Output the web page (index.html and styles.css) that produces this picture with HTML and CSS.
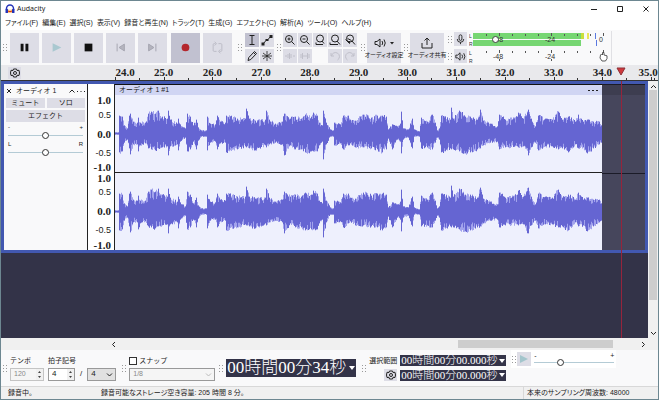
FILE: index.html
```html
<!DOCTYPE html>
<html lang="ja">
<head>
    <meta charset="utf-8">
    <title>Audacity</title>
    <link rel="stylesheet" href="styles.css">
</head>
<body>
<div id="app">
    <header class="titlebar">
        <svg class="logo" width="10" height="10" viewBox="0 0 20 20">
            <path d="M3 12V9a7 7 0 0 1 14 0v3" fill="none" stroke="#2433b8" stroke-width="3"/>
            <rect x="1" y="10" width="5" height="8" rx="1" fill="#2433b8"/>
            <rect x="14" y="10" width="5" height="8" rx="1" fill="#2433b8"/>
            <path d="M6 14l2-4 2 6 2-6 2 4v3H6z" fill="#f59a1c"/>
            <path d="M7 15h6" stroke="#e2321c" stroke-width="2"/>
        </svg>
        <span>Audacity</span>
        <div class="window-buttons">
            <button aria-label="最小化"><svg width="8" height="8"><path d="M1 4.5h6"/></svg></button>
            <button aria-label="最大化"><svg width="8" height="8"><path d="M1.5 1.5h5v5h-5z"/></svg></button>
            <button aria-label="閉じる"><svg width="8" height="8"><path d="M1.5 1.5l5 5M6.5 1.5l-5 5"/></svg></button>
        </div>
    </header>

    <nav class="menu">
        <a href="#">ファイル(F)</a>
        <a href="#">編集(E)</a>
        <a href="#">選択(S)</a>
        <a href="#">表示(V)</a>
        <a href="#">録音と再生(N)</a>
        <a href="#">トラック(T)</a>
        <a href="#">生成(G)</a>
        <a href="#">エフェクト(C)</a>
        <a href="#">解析(A)</a>
        <a href="#">ツール(O)</a>
        <a href="#">ヘルプ(H)</a>
    </nav>

    <div class="toolbar">
        <i class="grip"></i>
        <div class="transport">
            <button aria-label="一時停止"><svg viewBox="0 0 30 30"><path d="M11 11h3v8h-3zM16 11h3v8h-3z" fill="#111"/></svg></button>
            <button aria-label="再生"><svg viewBox="0 0 30 30"><path d="M11 10.5l9 4.5-9 4.5z" fill="#a9c8d0"/></svg></button>
            <button aria-label="停止"><svg viewBox="0 0 30 30"><path d="M11 11h8v8h-8z" fill="#111"/></svg></button>
            <button aria-label="先頭へ"><svg viewBox="0 0 30 30"><path d="M11.5 11v8M19 11.5v7L13.5 15z" fill="#b4b4be" stroke="#a5a5b0"/></svg></button>
            <button aria-label="末尾へ"><svg viewBox="0 0 30 30"><path d="M18.5 11v8M11 11.5v7l5.5-3.5z" fill="#b4b4be" stroke="#a5a5b0"/></svg></button>
            <button class="pressed" aria-label="録音"><svg viewBox="0 0 30 30"><circle cx="15" cy="15" r="4" fill="#b4262c"/></svg></button>
            <button aria-label="ループ"><svg viewBox="0 0 30 30"><path d="M14 19h-2.5a1 1 0 0 1-1-1v-6a1 1 0 0 1 1-1H13M16 11h2.500a1 1 0 0 1 1 1v6a1 1 0 0 1-1 1H17M12 9l2 2-2 2M18 17l-2 2 2 2" fill="none" stroke="#bcbcc6"/></svg></button>
        </div>
        <i class="grip"></i>
        <div class="tools">
            <button class="pressed" aria-label="選択ツール"><svg viewBox="0 0 14 14"><path d="M4.5 2.5h5M7 2.5v9M4.5 11.5h5"/></svg></button>
            <button aria-label="エンベロープツール"><svg viewBox="0 0 14 14"><path d="M3 11l3-3.5 2-1L11 3"/><path d="M1.5 9.5h3v3h-3zM9.5 2h3v3h-3zM5.5 6h3v2h-3z" fill="#222" stroke="none"/></svg></button>
            <button aria-label="描画ツール"><svg viewBox="0 0 14 14"><path d="M3 11.5l.8-3L9.5 2.5l2 2-5.7 6zM8.5 3.5l2 2"/></svg></button>
            <button aria-label="マルチツール"><svg viewBox="0 0 14 14"><path d="M7 2v10M3 4l8 6M11 4l-8 6M2 7h10" stroke-width=".8"/></svg></button>
        </div>
        <i class="grip"></i>
        <div class="zooms">
            <button aria-label="ズームイン"><svg viewBox="0 0 14 14"><circle cx="6" cy="6" r="3.5"/><path d="M8.5 8.5l3 3M4.5 6h3M6 4.5v3"/></svg></button>
            <button aria-label="ズームアウト"><svg viewBox="0 0 14 14"><circle cx="6" cy="6" r="3.5"/><path d="M8.5 8.5l3 3M4.5 6h3"/></svg></button>
            <button aria-label="選択範囲に合わせる"><svg viewBox="0 0 14 14"><circle cx="7" cy="5.5" r="3.5"/><path d="M9 8l2 2.5M3 11.5h7M3 9.5v2"/></svg></button>
            <button aria-label="全体に合わせる"><svg viewBox="0 0 14 14"><circle cx="7" cy="5.5" r="3.5"/><path d="M9 8l3 3.5M2 11.5h8M2 9.5v2"/></svg></button>
            <button aria-label="ズーム切替"><svg viewBox="0 0 14 14"><circle cx="7" cy="5.5" r="3.5"/><path d="M9 8l3 3.5M2.500 6.5l4 4M6.5 10.5V8M4.5 5.5l4 2"/></svg></button>
            <button class="off" aria-label="トリム"><svg viewBox="0 0 14 14"><path d="M2 7h2M10 7h2M5 5v4M6.5 4v6M8 5v4"/></svg></button>
            <button class="off" aria-label="無音化"><svg viewBox="0 0 14 14"><path d="M3 5v4M4.5 4v6M5 7h4M9.5 4v6M11 5v4"/></svg></button>
            <span></span>
            <button class="off" aria-label="元に戻す"><svg viewBox="0 0 14 14"><path d="M3 4v3h3M3.5 7a4 4 0 1 1 6 4"/></svg></button>
            <button class="off" aria-label="やり直し"><svg viewBox="0 0 14 14"><path d="M11 4v3H8M10.5 7a4 4 0 1 0-6 4"/></svg></button>
        </div>
        <i class="grip"></i>
        <button class="labelled">
            <svg width="22" height="14" viewBox="0 0 22 14"><path d="M2 5.5h2L7 3v8L4 8.5H2zM9 5q1.500 2 0 4M11 3.5q2.5 3.5 0 7"/><path d="M17 6h4l-2 2.5z" fill="#222" stroke="none"/></svg>
            <span>オーディオ設定</span>
        </button>
        <i class="grip"></i>
        <button class="labelled">
            <svg width="14" height="14" viewBox="0 0 14 14"><path d="M2 7v5h10V7M7 9V2M4.5 4.5L7 2l2.5 2.5"/></svg>
            <span>オーディオ共有</span>
        </button>
        <div class="meters">
            <div class="meter-row">
                <i class="grip"></i>
                <button aria-label="録音メーター"><svg viewBox="0 0 14 14"><rect x="5.5" y="2" width="3" height="6" rx="1.5"/><path d="M3.5 6.5q0 3.5 3.5 3.5t3.5-3.5M7 10v2"/></svg></button>
                <svg class="meter" width="142" height="15" viewBox="0 0 142 15">
                    <text x="0" y="6">L</text><text x="0" y="14">R</text>
                    <path d="M4 1h108v6H4zM4 8h108v6H4z" fill="#76d672"/>
                    <path d="M112 1h3v6h-3z" fill="#c9df3c"/>
                    <path d="M118 1h2v6h-2z" fill="#ece65a"/>
                    <path d="M126.5 1v6M127.5 8v6" stroke="#5a78e0"/>
                    <path class="ticks" d="M17.5 2v2M30.5 1v3M43.5 2v2M56.5 2v2M69.5 2v2M82.5 1v3M95.5 2v2M108.5 2v2M121.5 2v2M134.5 1v3"/>
                    <text class="db" x="24" y="10">-48</text><text class="db" x="76" y="10">-24</text><text class="db" x="130" y="10">0</text>
                    <circle cx="26.5" cy="7.5" r="3" fill="#fff" stroke="#444"/>
                </svg>
            </div>
            <div class="meter-row">
                <i class="grip"></i>
                <button aria-label="再生メーター"><svg viewBox="0 0 14 14"><path d="M2 5.5h2L6.5 3v8L4 8.5H2zM8.5 5q1.500 2 0 4M10.5 3.5q2.5 3.5 0 7"/></svg></button>
                <svg class="meter" width="142" height="15" viewBox="0 0 142 15">
                    <text x="0" y="6">L</text><text x="0" y="14">R</text>
                    <path class="ticks" d="M17.5 2v2M30.5 1v3M30.5 10v2M43.5 2v2M56.5 2v2M69.5 2v2M82.5 1v3M82.5 10v2M95.5 2v2M108.5 2v2M121.5 2v2M134.5 1v3"/>
                    <text class="db" x="24" y="10">-48</text><text class="db" x="76" y="10">-24</text>
                    <path d="M131.5 6l1-1 1 1V3.5h1.500V6l3 .8v2.7l-1.5 2.5h-3.5l-2-3z" fill="#fff" stroke="#333" stroke-width=".8"/>
                </svg>
            </div>
        </div>
    </div>

    <div class="timeline">
        <div class="timeline-head">
            <button aria-label="タイムライン設定"><svg width="10" height="10" viewBox="0 0 10 10"><path d="M3.5 1h3L7 2.5l2-.2.5 2.7L9 7.5l-2-.2L6.5 9h-3L3 7.3l-2 .2L.5 5 1 2.3l2 .2z"/><circle cx="5" cy="5" r="1.5"/></svg></button>
        </div>
        <div class="seconds">
            <span class="first"><b>24.0</b></span><span><b>25.0</b></span><span><b>26.0</b></span><span><b>27.0</b></span><span><b>28.0</b></span><span><b>29.0</b></span><span><b>30.0</b></span><span><b>31.0</b></span><span><b>32.0</b></span><span><b>33.0</b></span><span><b>34.0</b></span><span class="last"><b>35.0</b></span>
            <svg class="playhead" width="10" height="9"><path d="M1 1h8L5 8z"/></svg>
        </div>
    </div>

    <main class="workspace">
        <div class="canvas">
            <section class="track">
                <div class="panel">
                    <div class="track-title">
                        <button aria-label="トラックを閉じる"><svg width="6" height="6"><path d="M1 1l4 4M5 1L1 5"/></svg></button>
                        <span>オーディオ 1</span>
                        <button aria-label="折りたたむ"><svg width="6" height="6"><path d="M.5 4.5L3 2l2.5 2.5"/></svg></button>
                        <button aria-label="メニュー"><svg width="8" height="6"><path d="M0 3.5h1M3.5 3.5h1M7 3.5h1"/></svg></button>
                    </div>
                    <div class="mute-solo">
                        <button>ミュート</button>
                        <button>ソロ</button>
                    </div>
                    <button class="effects">エフェクト</button>
                    <div class="slider">
                        <span>-</span><span>+</span>
                        <input type="range" aria-label="ゲイン" min="0" max="100" value="50">
                    </div>
                    <div class="slider">
                        <span>L</span><span>R</span>
                        <input type="range" aria-label="パン" min="0" max="100" value="50">
                    </div>
                </div>
                <div class="scale">
                    <div class="channel-scale"><b>1.0</b><span>0.5</span><b>0.0</b><span>-0.5</span><b>-1.0</b></div>
                    <div class="channel-scale"><b>1.0</b><span>0.5</span><b>0.0</b><span>-0.5</span><b>-1.0</b></div>
                </div>
                <div class="lane">
                    <div class="clip">
                        <div class="clip-head"><span>オーディオ 1 #1</span><svg width="10" height="10"><path d="M0 5.500h2M4 5.500h2M8 5.500h2"/></svg></div>
                        <svg class="wave" viewBox="0 -39 487 78" preserveAspectRatio="none"></svg>
                        <svg class="wave" viewBox="0 -39 487 78" preserveAspectRatio="none"></svg>
                    </div>
                    <div class="empty"></div>
                </div>
            </section>
            <div class="playline"></div>
        </div>
        <div class="vscroll">
            <svg width="7" height="7"><path d="M1 5l2.5-2.5L6 5"/></svg>
            <div class="thumb"></div>
            <svg width="7" height="7"><path d="M1 2l2.5 2.5L6 2"/></svg>
        </div>
    </main>

    <div class="hscroll">
        <svg width="7" height="7"><path d="M5 1L2.5 3.5 5 6"/></svg>
        <div class="thumb"></div>
        <svg width="7" height="7"><path d="M2 1l2.5 2.5L2 6"/></svg>
    </div>

    <div class="bottombar">
        <i class="grip"></i>
        <div class="field tempo">
            <label for="tempo">テンポ</label>
            <div class="spin off"><input id="tempo" value="120" disabled><svg width="7" height="11"><path d="M2 4l1.5-2L5 4zM2 7l1.5 2L5 7z"/></svg></div>
        </div>
        <div class="field signature">
            <label for="beats">拍子記号</label>
            <div class="line">
                <div class="spin"><input id="beats" value="4"><svg width="7" height="11"><path d="M2 4l1.5-2L5 4zM2 7l1.5 2L5 7z"/></svg></div>
                <span>/</span>
                <div class="pick"><select aria-label="音符"><option>4</option></select><svg width="7" height="7"><path d="M1 2.5L3.5 5 6 2.5"/></svg></div>
            </div>
        </div>
        <i class="grip"></i>
        <div class="field snap">
            <label><input type="checkbox">スナップ</label>
            <div class="pick off"><select aria-label="スナップ単位" disabled><option>1/8</option></select><svg width="7" height="7"><path d="M1 2.5L3.5 5 6 2.5"/></svg></div>
        </div>
        <i class="grip"></i>
        <div class="clock"><span>00時間00分34秒</span><i class="caret"></i></div>
        <i class="grip divided"></i>
        <div class="selection">
            <span>選択範囲</span>
            <div class="clock small"><span>00時間00分00.000秒</span><i class="caret"></i></div>
            <button aria-label="選択範囲の設定"><svg width="10" height="10" viewBox="0 0 10 10"><path d="M3.5 1h3L7 2.5l2-.2.5 2.7L9 7.5l-2-.2L6.5 9h-3L3 7.3l-2 .2L.5 5 1 2.3l2 .2z"/><circle cx="5" cy="5" r="1.5"/></svg></button>
            <div class="clock small"><span>00時間00分00.000秒</span><i class="caret"></i></div>
        </div>
        <div class="speed">
            <i class="grip"></i>
            <button aria-label="指定速度で再生"><svg width="14" height="14"><path d="M3 3l8 4-8 4z"/></svg></button>
            <div class="slider">
                <span>-</span><span>+</span>
                <input type="range" aria-label="再生速度" min="0" max="100" value="31">
            </div>
        </div>
    </div>

    <footer class="status">
        <span class="state">録音中。</span>
        <span class="space">録音可能なストレージ空き容量: 205 時間 8 分。</span>
        <span class="rate">本来のサンプリング周波数: 48000</span>
    </footer>
</div>
<script src="wave.js"></script>
</body>
</html>
```
FILE: styles.css
```css
* {
    box-sizing: border-box;
}
body {
    margin: 0;
    font: 7px/10px "Liberation Sans", "Noto Sans CJK JP", sans-serif;
    font-feature-settings: "palt";
    color: #222;
}
button, input, select {
    font: inherit;
    color: inherit;
    margin: 0;
    padding: 0;
    border: 0;
    border-radius: 0;
}
button {
    display: flex;
    align-items: center;
    justify-content: center;
    background: #dddde6;
    font-feature-settings: inherit;
}
svg {
    display: block;
    flex: none;
    fill: none;
    stroke: #222;
}
#app {
    display: flex;
    flex-direction: column;
    min-height: 100vh;
    background: #f9f9fa;
    border: 1px solid #6d8791;
}

/* title and menu */
.titlebar {
    display: flex;
    align-items: center;
    gap: 2px;
    height: 15px;
    padding: 0 8px 0 4px;
    background: #fff;
    font-family: "Noto Sans", sans-serif;
}
.logo {
    stroke: none;
}
.window-buttons {
    display: flex;
    gap: 18px;
    margin-left: auto;
}
.window-buttons button {
    background: none;
}
.menu {
    display: flex;
    gap: 4px;
    height: 14px;
    padding: 0 4px;
    background: #fff;
    line-height: 14px;
    white-space: nowrap;
}
.menu a {
    color: #222;
    text-decoration: none;
}

/* top toolbar */
.grip {
    flex: none;
    width: 5px;
    height: 9px;
    background: radial-gradient(circle, #999 0 1px, transparent 1px) 0 0 / 3px 3px;
}
.toolbar {
    display: flex;
    align-items: center;
    gap: 2px;
    height: 35px;
    padding-left: 1px;
    background: #f9f9fa;
}
.toolbar svg:not(.meter) {
    max-width: 100%;
}
.transport {
    display: flex;
    gap: 3px;
    margin: 0 3px 0 1px;
}
.transport button {
    width: 29px;
    height: 30px;
}
.transport svg {
    width: 29px;
    stroke: none;
}
.transport .pressed {
    margin-left: 1px;
}
.pressed {
    background: #c1c1d0;
}
.tools, .zooms {
    display: grid;
    grid-template-columns: repeat(2, 14px);
    grid-auto-rows: 14px;
    gap: 2px 1px;
}
.tools {
    margin-left: 1px;
}
.zooms {
    grid-template-columns: repeat(5, 14px);
    margin-right: 1px;
}
.toolbar .off svg {
    stroke: #c0c0ca;
}
.labelled {
    flex-direction: column;
    width: 34px;
    height: 30px;
    white-space: nowrap;
}
.labelled span {
    font-size: 6px;
}
.meters {
    flex: none;
    margin-left: 1px;
    border-right: 1px solid #e0e0e4;
}
.meter-row {
    display: flex;
    align-items: center;
    gap: 2px;
    height: 17px;
}
.meter-row button {
    width: 13px;
    height: 14px;
}
.meter {
    stroke: none;
}
.meter text {
    font-size: 5px;
    fill: #333;
}
.meter .db {
    font-size: 7px;
}
.ticks {
    stroke: #555;
}

/* time ruler */
.timeline {
    display: flex;
    height: 16px;
    background: #e9e9ec;
    border-bottom: 1px solid #333;
}
.timeline-head {
    display: flex;
    align-items: center;
    width: 114px;
    padding-left: 7px;
}
.timeline-head button {
    width: 13px;
    height: 12px;
}
.seconds {
    position: relative;
    display: flex;
    flex: 1;
    font: 11px/14px "Liberation Serif", serif;
}
.seconds > span {
    flex: 1;
    min-width: 0;
    background: linear-gradient(#333, #333) 0 100% / 1px 3px no-repeat, linear-gradient(#333, #333) 50% 100% / 1px 2px no-repeat;
}
.seconds b {
    display: block;
    width: 20px;
    margin-left: -10px;
    text-align: center;
}
.seconds .first b {
    margin-left: 0;
}
.seconds .last {
    display: flex;
    flex: 0 0 7px;
    justify-content: flex-end;
}
.seconds .last b {
    flex: none;
    margin: 0;
}
.playhead {
    position: absolute;
    right: 32px;
    top: 2px;
    fill: #d0383c;
    stroke: #8d3038;
}

/* tracks */
.workspace {
    display: flex;
    flex: 1;
}
.canvas {
    position: relative;
    flex: 1;
    background: #333348;
}
.track {
    display: flex;
    height: 172px;
    border: 3px solid #4258b0;
    font-feature-settings: normal;
}
.panel {
    display: flex;
    flex-direction: column;
    gap: 2px;
    width: 84px;
    padding: 2px;
    background: #f9f9fa;
    border-right: 1px solid #222;
}
.track-title {
    display: flex;
    align-items: center;
    gap: 2px;
    height: 10px;
}
.track-title span {
    flex: 1;
    padding-left: 2px;
    white-space: nowrap;
}
.track-title button {
    background: none;
}
.mute-solo {
    display: flex;
    gap: 2px;
}
.mute-solo button {
    flex: 1;
    height: 10px;
}
.effects {
    height: 12px;
}
.slider {
    display: flex;
    flex-wrap: wrap;
    justify-content: space-between;
    padding: 0 2px;
    font-size: 6px;
    line-height: 7px;
}
.slider input {
    width: 100%;
    height: 8px;
    appearance: none;
    background: linear-gradient(#b4cbd5, #b4cbd5) 0 50% / 100% 1px no-repeat;
}
.slider input::-webkit-slider-thumb {
    appearance: none;
    width: 7px;
    height: 7px;
    border: 1px solid #333;
    border-radius: 50%;
    background: #fff;
}
.scale {
    display: flex;
    flex-direction: column;
    width: 27px;
    padding-top: 11px;
    background: #fff;
    border-right: 1px solid #222;
}
.channel-scale {
    display: grid;
    flex: 1;
    grid-template-rows: 11fr 18fr 20fr 18fr 11fr;
    align-items: center;
    padding-right: 3px;
    text-align: right;
    font: 11px/10px "Liberation Serif", serif;
}
.channel-scale span {
    font: 9px/10px "Liberation Sans", sans-serif;
}
.lane {
    display: flex;
    flex: 1;
}
.clip {
    display: flex;
    flex: 487;
    flex-direction: column;
    border-top: 1px solid #111;
    background: #eef0fd;
}
.clip-head {
    display: flex;
    justify-content: space-between;
    padding: 0 4px;
    background: #d0d5f3;
    border-radius: 0 3px 0 0;
}
.wave {
    flex: 1;
    width: 100%;
    min-height: 0;
    stroke: none;
}
.wave + .wave {
    border-top: 1px solid #222;
}
.empty {
    flex: 43;
    background: linear-gradient(#1b1b28 1px, #3d3d50 1px 11px, #46465c 11px 89px, #1b1b28 89px 90px, #46465c 90px);
}
.playline {
    position: absolute;
    top: 0;
    bottom: 0;
    right: 26px;
    width: 1px;
    background: #96243c;
}
.vscroll {
    display: flex;
    flex-direction: column;
    align-items: center;
    width: 10px;
    padding: 2px 0 1px;
    background: #f0f0f0;
}
.vscroll .thumb {
    width: 8px;
    height: 210px;
    margin-bottom: auto;
}
.thumb {
    background: #cdcdcd;
}
.hscroll {
    display: flex;
    align-items: center;
    height: 12px;
    padding: 0 11px 0 109px;
    background: #f0f0f0;
}
.hscroll .thumb {
    width: 155px;
    height: 8px;
    margin: 0 27px 0 auto;
}

/* bottom toolbar */
.bottombar {
    display: flex;
    align-items: center;
    gap: 3px;
    height: 36px;
    padding-left: 1px;
    background: #f9f9fa;
}
.field {
    display: flex;
    flex-direction: column;
    gap: 2px;
}
.field label {
    display: flex;
    align-items: center;
    gap: 2px;
    height: 10px;
    font-feature-settings: normal;
    white-space: nowrap;
}
.field input[type="checkbox"] {
    width: 8px;
    height: 8px;
    appearance: none;
    border: 1px solid #333;
    background: #fff;
}
.line {
    display: flex;
    align-items: center;
    gap: 5px;
    font-size: 8px;
}
.spin, .pick {
    display: flex;
    align-items: center;
    height: 13px;
    border: 1px solid #999;
    background: #fff;
}
.spin {
    width: 27px;
}
.spin input {
    flex: 1;
    min-width: 0;
    padding-left: 3px;
    background: none;
}
.spin svg {
    background: #f0f0f0;
    fill: #444;
    stroke: none;
}
.tempo .spin {
    width: 34px;
}
.pick {
    width: 29px;
    padding-right: 2px;
    background: #e1e1e1;
}
.pick select {
    flex: 1;
    min-width: 0;
    appearance: none;
    padding-left: 3px;
    background: none;
    opacity: 1;
}
.snap .pick {
    width: 86px;
}
.spin.off, .pick.off {
    color: #888;
    border-color: #c4c4c4;
    background: #f5f5f5;
}
.pick.off {
    border-color: #999;
}
.off svg {
    stroke: #bbb;
}
.spin.off svg {
    stroke: none;
}
.signature {
    margin: 0 2px 0 1px;
}
.clock {
    display: flex;
    align-items: center;
    justify-content: space-between;
    width: 130px;
    height: 18px;
    padding: 0 1px;
    background: #333348;
    color: #fff;
    font: 17px/18px "Liberation Serif", "Noto Sans CJK JP", serif;
    font-feature-settings: normal;
    font-weight: 300;
    white-space: nowrap;
}
.caret {
    border: 3px solid transparent;
    border-top: 4px solid #fff;
    border-bottom: 0;
}
.clock.small {
    width: 106px;
    height: 11px;
    font-size: 11px;
    line-height: 11px;
}
.grip.divided {
    margin-left: 2px;
}
.selection {
    display: grid;
    grid-template-columns: 28px 106px;
    gap: 3px;
    align-items: center;
    margin-right: 2px;
}
.selection > span {
    white-space: nowrap;
}
.selection button {
    justify-self: end;
    width: 13px;
    height: 12px;
}
.speed {
    display: flex;
    align-items: center;
    align-self: flex-start;
    gap: 1px;
    height: 18px;
    background: #fff;
}
.speed svg {
    fill: #a3c5cc;
    stroke: none;
}
.speed .slider {
    width: 84px;
}
.speed .slider span {
    font-size: 7px;
}

/* status bar */
.status {
    display: flex;
    height: 13px;
    padding-left: 7px;
    background: #f0f0f0;
    border-top: 1px solid #d8d8d8;
    line-height: 12px;
    white-space: nowrap;
}
.state {
    width: 93px;
}
.rate {
    width: 135px;
    margin-left: auto;
    padding-left: 3px;
    border-left: 1px solid #d8d8d8;
}
```
FILE: wave.js
```js
// Peaks of the clip: x, height above zero, depth below zero.
const peaks = [
    [0, 1, 1], [3, 1, 1], [4, 18, 19], [7, 17, 18], [9, 8, 9], [12, 5, 6], [14, 18, 15], [15, 20, 21],
    [18, 12, 11], [22, 11, 11], [23, 16, 18], [25, 11, 12], [30, 11, 10], [33, 20, 15], [36, 22, 16],
    [40, 20, 17], [43, 23, 15], [47, 17, 14], [52, 15, 13], [53, 23, 22], [55, 14, 13], [62, 10, 11],
    [63, 15, 17], [65, 9, 8], [70, 5, 4], [72, 20, 18], [75, 17, 16], [78, 8, 8], [81, 14, 16],
    [83, 6, 7], [86, 3, 3], [91, 3, 3], [92, 17, 17], [95, 10, 9], [100, 9, 8], [102, 18, 16],
    [105, 12, 10], [110, 11, 9], [111, 18, 19], [122, 15, 16], [130, 15, 13], [131, 25, 14], [134, 15, 15],
    [140, 13, 17], [150, 14, 12], [151, 23, 14], [154, 14, 11], [160, 10, 9], [167, 12, 11], [169, 20, 22],
    [175, 15, 12], [180, 17, 16], [186, 15, 16], [190, 19, 19], [196, 17, 18], [198, 21, 18], [202, 18, 18],
    [204, 11, 12], [207, 8, 8], [208, 23, 26], [211, 11, 11], [215, 4, 3], [218, 3, 3], [219, 11, 12],
    [225, 9, 10], [228, 18, 16], [233, 18, 12], [235, 14, 10], [240, 13, 14], [248, 19, 14], [256, 16, 15],
    [262, 18, 16], [267, 18, 19], [271, 17, 16], [273, 4, 5], [277, 9, 16], [282, 7, 6], [285, 10, 8],
    [286, 22, 20], [288, 5, 6], [293, 4, 4], [297, 15, 15], [299, 4, 3], [304, 2, 3], [306, 16, 15],
    [312, 12, 14], [317, 19, 16], [320, 11, 9], [322, 3, 4], [324, 5, 6], [326, 18, 19], [335, 14, 15],
    [336, 26, 16], [338, 15, 16], [344, 23, 18], [350, 17, 20], [355, 17, 19], [362, 14, 16], [365, 24, 15],
    [368, 13, 12], [375, 10, 9], [382, 7, 8], [384, 19, 16], [390, 14, 14], [402, 17, 13], [403, 21, 14],
    [408, 15, 13], [413, 24, 22], [416, 15, 14], [420, 7, 9], [423, 18, 17], [430, 15, 13], [437, 14, 13],
    [443, 22, 16], [447, 14, 15], [453, 17, 19], [460, 12, 11], [463, 19, 15], [468, 12, 14], [472, 14, 20],
    [478, 12, 15], [484, 12, 11], [486, 8, 9], [487, 7, 8]
];

// small repeatable noise, 0..1
function noise(n) {
    const v = Math.sin(n * 12.9898) * 43758.5453;
    return v - Math.floor(v);
}

function outline(side, low, seed) {
    const points = [];
    let k = 0;
    for (let x = 0; x < 487; x++) {
        while (peaks[k + 1][0] <= x) k++;
        const a = peaks[k], b = peaks[k + 1];
        const t = (x - a[0]) / (b[0] - a[0]);
        let h = a[side] + (b[side] - a[side]) * t;
        if (t > 0) h *= low + (1.1 - low) * noise(x * side + seed);
        const y = (side == 1 ? -h : h).toFixed(1);
        points.push(x + ',' + y, (x + 1) + ',' + y);
    }
    return points;
}

function shape(low, seed, color) {
    const bottom = [];
    const down = outline(2, low, seed);
    for (let i = down.length - 1; i >= 0; i--) bottom.push(down[i]);
    return '<polygon fill="' + color + '" points="' + outline(1, low, seed).concat(bottom).join(' ') + '"/>';
}

document.querySelectorAll('.wave').forEach(function (svg, i) {
    svg.innerHTML = shape(0.85, 3 + i, '#a2a3ec') + shape(0.55, 40 + i, '#6565d2');
});
```
